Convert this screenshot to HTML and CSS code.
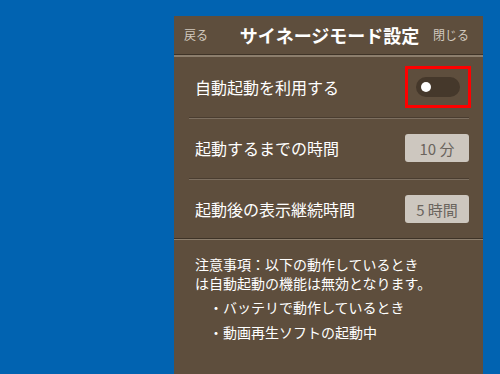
FILE: index.html
```html
<!DOCTYPE html>
<html lang="ja">
<head>
  <meta charset="UTF-8" />
  <title>サイネージモード設定</title>
  <link rel="stylesheet" href="styles.css">
</head>
<body>
  <div class="panel">
    <div class="header">
      <span class="header-link">戻る</span>
      <span class="title">サイネージモード設定</span>
      <span class="header-link">閉じる</span>
    </div>

    <div class="rows">
      <div class="row">
        <span class="label">自動起動を利用する</span>
        <span class="highlight">
          <span class="toggle"><span class="knob"></span></span>
        </span>
      </div>
      <div class="row">
        <span class="label">起動するまでの時間</span>
        <span class="value">10 分</span>
      </div>
      <div class="row">
        <span class="label">起動後の表示継続時間</span>
        <span class="value">5 時間</span>
      </div>
    </div>

    <div class="note">
      <p>注意事項：以下の動作しているとき<br>は自動起動の機能は無効となります。</p>
      <ul>
        <li>・バッテリで動作しているとき</li>
        <li>・動画再生ソフトの起動中</li>
      </ul>
    </div>
  </div>
</body>
</html>
```

FILE: styles.css
```css
:root {
  --blue: #0163b1;
  --panel: #5e4e3d;
  --groove-dark: #3e3327;
  --groove-light: #8c7e6d;
  --text: #ffffff;
  --muted: #d2c9be;
}
* {
  box-sizing: border-box;
  margin: 0;
  padding: 0;
}
html, body {
  width: 100%;
  height: 100%;
  overflow: hidden;
}
body {
  background: var(--blue);
  font-family: "Noto Sans CJK JP", "Noto Sans", sans-serif;
  color: var(--text);
  padding: 16px 0 0 174px;
}
.panel {
  width: 309px;
  height: 358px;
  background: var(--panel);
}
.header {
  height: 41px;
  padding: 0 14px 2px 10px;
  display: flex;
  align-items: center;
  justify-content: space-between;
  border-bottom: 2px solid var(--groove-light);
  box-shadow: inset 0 -3px 0 -2px var(--groove-dark);
}
.header-link {
  font-size: 12px;
  color: var(--muted);
  width: 36px;
}
.header-link:last-child {
  text-align: right;
}
.title {
  font-size: 18px;
  font-weight: bold;
  margin-left: 6px;
}
.rows {
  padding: 0 14px 0 15px;
  border-bottom: 1px solid var(--groove-light);
  box-shadow: 0 -1px 0 var(--groove-dark) inset;
}
.row {
  height: 61px;
  display: flex;
  align-items: center;
  justify-content: space-between;
  border-bottom: 1px solid #4a3d30;
  box-shadow: 0 1px 0 #7d6f60;
}
.row:last-child {
  border-bottom: none;
  box-shadow: none;
  height: 60px;
}
.label {
  font-size: 16px;
  padding-left: 6px;
}
.highlight {
  border: 3px solid #ff0000;
  padding: 8px;
  margin-right: -2px;
  display: flex;
}
.toggle {
  width: 44px;
  height: 20px;
  border-radius: 10px;
  background: #45382b;
  display: flex;
  align-items: center;
  padding-left: 5px;
}
.knob {
  width: 10px;
  height: 10px;
  border-radius: 50%;
  background: #ffffff;
}
.value {
  width: 64px;
  height: 28px;
  border-radius: 3px;
  background: #cdc7bf;
  color: #6a645d;
  font-size: 15px;
  display: flex;
  align-items: center;
  justify-content: center;
}
.note {
  padding: 15px 15px 0 21px;
  font-size: 14px;
}
.note p {
  line-height: 19px;
}
.note ul {
  list-style: none;
  margin-top: 2px;
  padding-left: 14px;
}
.note li {
  line-height: 25px;
}
```
